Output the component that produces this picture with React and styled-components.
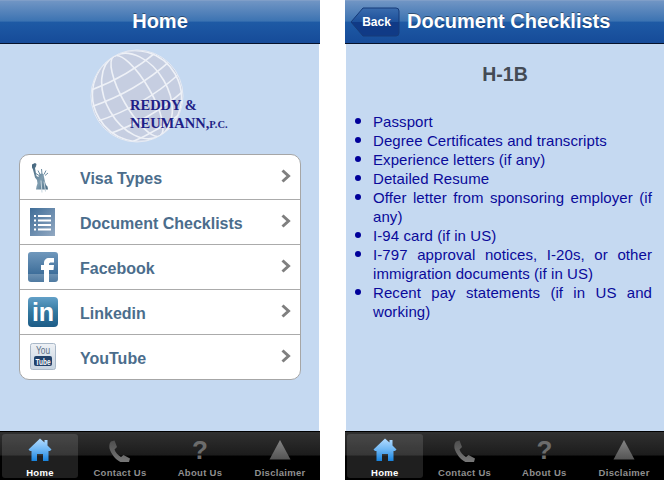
import React from "react";
import styled, { createGlobalStyle } from "styled-components";

const GlobalStyle = createGlobalStyle`
  html, body { margin: 0; padding: 0; background: #fff; }
  body { font-family: "Liberation Sans", Arial, sans-serif; }
`;

const menuItems = [
  { label: "Visa Types", icon: <StatueIcon /> },
  { label: "Document Checklists", icon: <ListIcon /> },
  { label: "Facebook", icon: <FacebookIcon /> },
  { label: "Linkedin", icon: <LinkedinIcon /> },
  { label: "YouTube", icon: <YoutubeIcon /> },
];

const checklist = [
  "Passport",
  "Degree Certificates and transcripts",
  "Experience letters (if any)",
  "Detailed Resume",
  "Offer letter from sponsoring employer (if any)",
  "I-94 card (if in US)",
  "I-797 approval notices, I-20s, or other immigration documents (if in US)",
  "Recent pay statements (if in US and working)",
];

function StatueIcon() {
  return (
    <svg width="24" height="32" viewBox="2 -1.500 24 32">
      <defs>
        <linearGradient id="statue" x1="0" y1="0" x2="1" y2="1">
          <stop offset="0" stopColor="#3f6078" />
          <stop offset="0.6" stopColor="#7f9db0" />
          <stop offset="1" stopColor="#45687f" />
        </linearGradient>
      </defs>
      <path d="M3 2l3-1.500 1.500 1-.5 2.500-1 1.500 1.500 8 2 1 1-3 2-.5 2 .5.500 3 1 5 1 3 1.500 1.500.500 3H7l.500-3 1-3-.500-3.500-2-2.500L4 7 3 5z" fill="url(#statue)" />
      <path d="M11 12l-2-4M13 11.500l-.5-5M15 12l2-4M16 13l3-2.500M10 13l-3-2" stroke="#6d8da2" strokeWidth="1" fill="none" />
      <path d="M12 18l1 12M15 19l1.500 10" stroke="#c7d5de" strokeWidth="1" fill="none" />
    </svg>
  );
}

function ListIcon() {
  return (
    <svg width="26" height="29" viewBox="0 0 26 29">
      <defs>
        <linearGradient id="sheet" x1="0" y1="0" x2="1" y2="1">
          <stop offset="0" stopColor="#3f6d98" />
          <stop offset="1" stopColor="#93a9c2" />
        </linearGradient>
      </defs>
      <rect width="25" height="28" fill="url(#sheet)" />
      {[7, 11.5, 16, 20.5].map((y) => (
        <g key={y} fill="#fff">
          <rect x="4" y={y} width="2" height="2" />
          <rect x="8" y={y} width="13" height="2" />
        </g>
      ))}
    </svg>
  );
}

function FacebookIcon() {
  return (
    <svg width="30" height="31" viewBox="0 0 30 31">
      <defs>
        <linearGradient id="fb" x1="0" y1="0" x2="0" y2="1">
          <stop offset="0" stopColor="#7098bc" />
          <stop offset="0.72" stopColor="#3f6f9b" />
          <stop offset="0.73" stopColor="#6e92b3" />
          <stop offset="1" stopColor="#4f7aa1" />
        </linearGradient>
      </defs>
      <rect width="30" height="30" rx="3" fill="url(#fb)" />
      <path d="M16 30V18h-3v-5h3V11c0-3 2-5 5-5h5v4.500h-3c-1 0-2 .5-2 1.500V13h5l-.5 5H21v12z" fill="#fff" />
    </svg>
  );
}

function LinkedinIcon() {
  return (
    <svg width="30" height="30" viewBox="0 0 30 30">
      <defs>
        <linearGradient id="li" x1="0" y1="0" x2="0" y2="1">
          <stop offset="0" stopColor="#62a0c8" />
          <stop offset="0.5" stopColor="#33789f" />
          <stop offset="1" stopColor="#1d5c87" />
        </linearGradient>
      </defs>
      <rect width="30" height="30" rx="4" fill="url(#li)" />
      <text x="15" y="24" textAnchor="middle" fontFamily="Liberation Sans" fontWeight="700" fontSize="25" fill="#fff">in</text>
    </svg>
  );
}

function YoutubeIcon() {
  return (
    <svg width="27" height="28" viewBox="0 0 27 28">
      <defs>
        <linearGradient id="yt" x1="0" y1="0" x2="0" y2="1">
          <stop offset="0" stopColor="#eef1f5" />
          <stop offset="1" stopColor="#c6d3e0" />
        </linearGradient>
      </defs>
      <rect x="0.5" y="0.5" width="25" height="26" rx="2" fill="url(#yt)" stroke="#a9b8c8" />
      <text x="13" y="11" textAnchor="middle" fontFamily="Liberation Sans" fontSize="10" textLength="14" lengthAdjust="spacingAndGlyphs" fill="#5c7187">You</text>
      <rect x="4" y="13" width="18" height="10" rx="2" fill="#22426b" />
      <text x="13" y="22" textAnchor="middle" fontFamily="Liberation Sans" fontWeight="700" fontSize="9" textLength="15" lengthAdjust="spacingAndGlyphs" fill="#fff">Tube</text>
    </svg>
  );
}

function HomeTabIcon() {
  return (
    <svg width="24" height="24" viewBox="0 0 24 24">
      <defs>
        <linearGradient id="house" x1="0" y1="0" x2="0" y2="1">
          <stop offset="0" stopColor="#b4dcff" />
          <stop offset="0.5" stopColor="#6db6f4" />
          <stop offset="1" stopColor="#1782dc" />
        </linearGradient>
      </defs>
      <path d="M12 .500l4.500 4V2h3v5.500l4 4-1.500 1.500h-1.500v10H15v-7H9v7H3.500V13H2L.500 11.500z" fill="url(#house)" />
    </svg>
  );
}

function PhoneTabIcon() {
  return (
    <svg width="24" height="24" viewBox="0 -2 24 24">
      <defs>
        <linearGradient id="phone" x1="0" y1="0" x2="0" y2="1">
          <stop offset="0" stopColor="#4e4e4e" />
          <stop offset="1" stopColor="#7a7a7a" />
        </linearGradient>
      </defs>
      <path d="M3 1.500L6.500 .500 9 7 6.500 9.500c1 3 3.500 6 6.500 7.500l2.500-2 6.500 3.500-1 3.500c-1 1.500-3 2-5 1.500C9 21.500 3.500 15 1.500 8.500 1 5.500 1.500 3 3 1.500z" fill="url(#phone)" />
    </svg>
  );
}

function HelpTabIcon() {
  return <HelpGlyph>?</HelpGlyph>;
}

function WarningTabIcon() {
  return (
    <svg width="24" height="24" viewBox="0 0 24 24">
      <defs>
        <linearGradient id="warn" x1="0" y1="0" x2="0" y2="1">
          <stop offset="0" stopColor="#858585" />
          <stop offset="1" stopColor="#545454" />
        </linearGradient>
      </defs>
      <path d="M12 2l10.500 19.500h-21z" fill="url(#warn)" />
    </svg>
  );
}

const tabs = [
  { label: "Home", icon: <HomeTabIcon /> },
  { label: "Contact Us", icon: <PhoneTabIcon /> },
  { label: "About Us", icon: <HelpTabIcon /> },
  { label: "Disclaimer", icon: <WarningTabIcon /> },
];

function Logo() {
  return (
    <svg width="160" height="100" viewBox="0 0 160 100">
      <defs>
        <clipPath id="globe">
          <circle cx="47" cy="50" r="45.500" />
        </clipPath>
      </defs>
      <circle cx="47" cy="50" r="46" fill="#c6cee1" stroke="#e6ebf4" strokeWidth="1" />
      <g clipPath="url(#globe)" fill="none" stroke="#eef1f7" strokeWidth="1.600" transform="rotate(-30 47 50)">
        <ellipse cx="47" cy="50" rx="14" ry="46" />
        <ellipse cx="47" cy="50" rx="31" ry="46" />
        <ellipse cx="47" cy="50" rx="44" ry="46" />
        <path d="M0 20Q47 30 94 20M0 36Q47 46 94 36M0 52Q47 62 94 52M0 68Q47 78 94 68M0 84Q47 94 94 84" />
      </g>
      <g fontFamily="Liberation Serif" fontWeight="700" fill="#1f1f87" fontSize="14.500">
        <text x="40" y="64">REDDY &amp;</text>
        <text x="40" y="82">NEUMANN,<tspan fontSize="10.500">P.C.</tspan></text>
      </g>
    </svg>
  );
}

function TabBar() {
  return (
    <Tabs>
      {tabs.map((tab, i) => (
        <Tab key={tab.label} $active={i === 0}>
          {tab.icon}
          <TabLabel $active={i === 0}>{tab.label}</TabLabel>
        </Tab>
      ))}
    </Tabs>
  );
}

export default function App() {
  return (
    <>
      <GlobalStyle />
      <Page>
        <Screen>
          <NavBar>
            <Title $center>Home</Title>
          </NavBar>
          <Content>
            <LogoWrap>
              <Logo />
            </LogoWrap>
            <Menu>
              {menuItems.map((item) => (
                <MenuRow key={item.label}>
                  <MenuIcon>{item.icon}</MenuIcon>
                  <MenuLabel>{item.label}</MenuLabel>
                  <Chevron viewBox="0 0 10 14">
                    <path d="M1.500 1.500L7.500 7l-6 5.500" />
                  </Chevron>
                </MenuRow>
              ))}
            </Menu>
          </Content>
          <TabBar />
        </Screen>

        <Screen $narrow>
          <NavBar>
            <BackButton>
              <BackShape viewBox="0 0 50 30">
                <defs>
                  <linearGradient id="back" x1="0" y1="0" x2="0" y2="1">
                    <stop offset="0" stopColor="#3a6cae" />
                    <stop offset="0.5" stopColor="#1c4f99" />
                    <stop offset="0.51" stopColor="#103a86" />
                    <stop offset="1" stopColor="#103a86" />
                  </linearGradient>
                </defs>
                <path d="M1 15L13 1h33a3 3 0 0 1 3 3v22a3 3 0 0 1-3 3H13z" fill="url(#back)" stroke="#163a78" />
              </BackShape>
              <BackLabel>Back</BackLabel>
            </BackButton>
            <Title>Document Checklists</Title>
          </NavBar>
          <Content $flushLeft>
            <Heading>H-1B</Heading>
            <Checklist>
              {checklist.map((line) => (
                <li key={line}>{line}</li>
              ))}
            </Checklist>
          </Content>
          <TabBar />
        </Screen>
      </Page>
    </>
  );
}

const Page = styled.div`
  display: flex;
  justify-content: space-between;
  width: 664px;
  height: 480px;
  overflow: hidden;
`;

const Screen = styled.div`
  display: flex;
  flex-direction: column;
  width: ${(p) => (p.$narrow ? "319px" : "320px")};
  height: 480px;
`;

const NavBar = styled.div`
  display: flex;
  align-items: center;
  flex: 0 0 44px;
  padding: 0 5px;
  box-sizing: border-box;
  border-top: 1px solid #7f9ec8;
  border-bottom: 1px solid #06122b;
  background: linear-gradient(
    #7095c4 0%,
    #3c73b2 48%,
    #1e5aa5 50%,
    #164b99 100%
  );
`;

const Title = styled.div`
  flex: 1;
  padding-left: ${(p) => (p.$center ? "0" : "7px")};
  padding-bottom: 2px;
  color: #fff;
  font-size: 20px;
  font-weight: 700;
  text-align: ${(p) => (p.$center ? "center" : "left")};
  text-shadow: 0 -1px 0 rgba(0, 0, 0, 0.4);
`;

const BackButton = styled.div`
  position: relative;
  display: flex;
  align-items: center;
  justify-content: center;
  flex: 0 0 50px;
  height: 30px;
  padding-left: 3px;
  box-sizing: border-box;
`;

const BackShape = styled.svg`
  position: absolute;
  left: 0;
  top: 0;
  width: 50px;
  height: 30px;
`;

const BackLabel = styled.span`
  position: relative;
  color: #fff;
  font-size: 12px;
  font-weight: 700;
`;

const Content = styled.div`
  flex: 1;
  display: flex;
  flex-direction: column;
  margin: ${(p) => (p.$flushLeft ? "0 0 0 1px" : "0 1px 0 0")};
  background: #c5d9f1;
`;

const LogoWrap = styled.div`
  display: flex;
  height: 110px;
  padding: 2px 0 0 90px;
  box-sizing: border-box;
`;

const Menu = styled.div`
  display: flex;
  flex-direction: column;
  width: 282px;
  margin-left: 19px;
  box-sizing: border-box;
  background: #fff;
  border: 1px solid #a6a6a6;
  border-radius: 10px;
`;

const MenuRow = styled.div`
  display: flex;
  align-items: center;
  height: 45px;
  padding-right: 9px;
  box-sizing: border-box;
  border-bottom: 1px solid #ababab;

  &:last-child {
    height: 44px;
    border-bottom: none;
  }
`;

const MenuIcon = styled.div`
  display: flex;
  justify-content: center;
  align-items: center;
  flex: 0 0 46px;
  margin-right: 14px;
`;

const MenuLabel = styled.div`
  flex: 1;
  padding-top: 4px;
  color: #4b6d8c;
  font-size: 16px;
  font-weight: 700;
`;

const Chevron = styled.svg`
  width: 10px;
  height: 14px;
  margin-bottom: 2px;

  path {
    fill: none;
    stroke: #7f7f7f;
    stroke-width: 3;
  }
`;

const Heading = styled.h1`
  margin: 0;
  padding-top: 20px;
  color: #444b55;
  font-size: 19.5px;
  line-height: 21px;
  font-weight: 700;
  text-align: center;
`;

const Checklist = styled.ul`
  margin: 27px 0 0;
  padding: 0 12px 0 27px;
  list-style: none;
  color: #0a0a9a;
  font-size: 15px;
  letter-spacing: 0.08px;
  line-height: 19px;
  text-align: justify;

  li {
    position: relative;
  }

  li::before {
    content: "";
    position: absolute;
    left: -18px;
    top: 6px;
    width: 6px;
    height: 6px;
    border-radius: 50%;
    background: #00009a;
  }
`;

const Tabs = styled.div`
  display: flex;
  flex: 0 0 49px;
  box-sizing: border-box;
  padding: 2px 0;
  border-top: 1px solid #000;
  background: linear-gradient(#303030 0%, #1c1c1c 48%, #000 50%, #000 100%);
`;

const Tab = styled.div`
  display: flex;
  flex-direction: column;
  align-items: center;
  flex: 1;
  margin: 0 2px;
  padding-top: 4px;
  border-radius: 3px;
  background: ${(p) => (p.$active ? "rgba(255, 255, 255, 0.12)" : "none")};
`;

const HelpGlyph = styled.span`
  height: 24px;
  color: #6c6c6c;
  font-size: 26px;
  line-height: 24px;
  font-weight: 700;
`;

const TabLabel = styled.span`
  margin-top: 6px;
  color: ${(p) => (p.$active ? "#fff" : "#8f8f8f")};
  font-size: 9.5px;
  line-height: 10px;
  font-weight: 700;
  letter-spacing: 0.3px;
`;
